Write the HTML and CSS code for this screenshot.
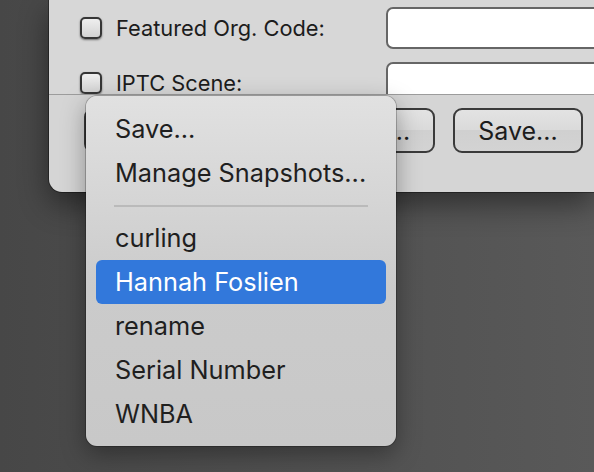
FILE: index.html
```html
<!DOCTYPE html>
<html>
<head>
<meta charset="utf-8">
<link rel="stylesheet" href="styles.css">
</head>
<body>
<div class="window">
  <div class="scroll">
    <div class="row">
      <span class="checkbox"></span>
      <span class="label">Featured Org. Code:</span>
      <span class="field"></span>
    </div>
    <div class="row">
      <span class="checkbox"></span>
      <span class="label">IPTC Scene:</span>
      <span class="field"></span>
    </div>
  </div>
  <div class="footer">
    <button class="btn btn-wide"></button>
    <button class="btn">Load...</button>
    <button class="btn">Save...</button>
  </div>
</div>
<div class="menu">
  <div class="item">Save...</div>
  <div class="item">Manage Snapshots...</div>
  <div class="sep"></div>
  <div class="item">curling</div>
  <div class="item selected">Hannah Foslien</div>
  <div class="item">rename</div>
  <div class="item">Serial Number</div>
  <div class="item">WNBA</div>
</div>
</body>
</html>
```
FILE: styles.css
```css
html, body {
  margin: 0;
  padding: 0;
}
body {
  width: 594px;
  height: 472px;
  overflow: hidden;
  position: relative;
  background: linear-gradient(to right, #474747, #595959);
  font-family: Inter, "Noto Sans", "Liberation Sans", sans-serif;
}
.window {
  margin-left: 49px;
  width: 545px;
  height: 192px;
  background: #d5d5d5;
  border-bottom-left-radius: 13px;
  box-shadow: 0 12px 30px rgba(0,0,0,0.45), 0 0 0 1px rgba(0,0,0,0.35);
  display: flex;
  flex-direction: column;
  overflow: hidden;
}
.scroll {
  flex: none;
  height: 95px;
  box-sizing: border-box;
  overflow: hidden;
  border-bottom: 1px solid #9c9c9c;
  padding: 7px 0 0 31px;
  display: flex;
  flex-direction: column;
  gap: 13px;
  background: #d7d7d7;
}
.row {
  flex: none;
  height: 42px;
  display: flex;
  align-items: center;
}
.checkbox {
  flex: none;
  width: 18px;
  height: 18px;
  border: 2px solid #363636;
  border-radius: 5px;
  background: linear-gradient(#efefef, #d3d3d3);
  box-shadow: 0 1px 2px rgba(0,0,0,0.5);
  margin-right: 14px;
}
.label {
  flex: none;
  width: 270px;
  font-size: 21.8px;
  color: #1c1c1c;
}
.field {
  flex: none;
  width: 240px;
  height: 38px;
  border: 2px solid #666;
  border-radius: 7px;
  background: #fff;
}
.footer {
  padding: 13px 0 0 35px;
  display: flex;
  gap: 18px;
}
.btn {
  flex: none;
  width: 130px;
  height: 45px;
  border: 2px solid #3a3a3a;
  border-radius: 9px;
  background: linear-gradient(#e3e3e3, #dadada 50%, #d0d0d0 50%, #d3d3d3);
  font-family: inherit;
  font-size: 25px;
  color: #1c1c1c;
  padding: 0;
}
.btn-wide {
  width: 203px;
}
.menu {
  position: absolute;
  left: 86px;
  top: 96px;
  width: 310px;
  height: 350px;
  box-sizing: border-box;
  padding: 11px 0 10px;
  border-radius: 11px;
  background: linear-gradient(#e1e1e1, #cbcbcb 55%, #c8c8c8);
  box-shadow: 0 8px 24px rgba(0,0,0,0.35), 0 0 0 1px rgba(0,0,0,0.22);
}
.item {
  height: 44px;
  line-height: 44px;
  margin: 0 10px;
  padding-left: 19px;
  border-radius: 6px;
  font-size: 25.3px;
  color: #1f1f1f;
  white-space: nowrap;
}
.item.selected {
  background: #3278db;
  color: #fff;
}
.sep {
  height: 21px;
  display: flex;
  align-items: center;
  padding: 0 28px;
}
.sep::before {
  content: "";
  flex: 1;
  height: 2px;
  background: #bababa;
}
```
